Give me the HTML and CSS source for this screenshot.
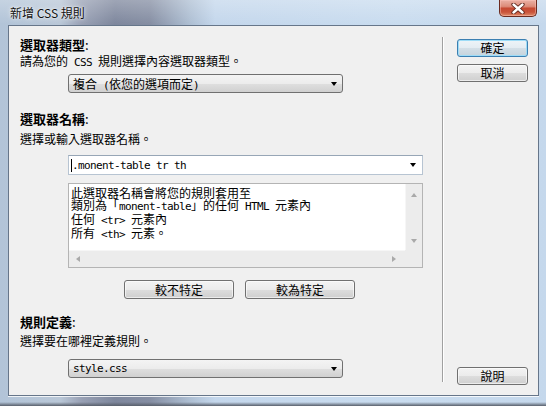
FILE: index.html
```html
<!DOCTYPE html>
<html lang="zh-Hant">
<head>
<meta charset="utf-8">
<title>新增 CSS 規則</title>
<link rel="stylesheet" href="styles.css">
</head>
<body>
<div class="window">
  <div class="titlebar">
    <span class="title">新增 CSS 規則</span>
    <div class="close">
      <svg width="16" height="11" viewBox="0 0 16 11">
        <path d="M3.5 1.5 L12.5 9.5 M12.5 1.5 L3.5 9.5" stroke="#5a2218" stroke-width="4.2" stroke-linecap="round"/>
        <path d="M3.5 1.5 L12.5 9.5 M12.5 1.5 L3.5 9.5" stroke="#ffffff" stroke-width="2.4" stroke-linecap="round"/>
      </svg>
    </div>
  </div>
  <div class="client">
    <div class="main">
      <div class="label first"><b>選取器類型</b>:</div>
      <div class="desc">請為您的<span class="en"> CSS </span>規則選擇內容選取器類型。</div>
      <div class="select s1"><span>複合<span class="en"> (</span>依您的選項而定<span class="en">)</span></span><i class="arrow"></i></div>

      <div class="label l2"><b>選取器名稱</b>:</div>
      <div class="desc d2">選擇或輸入選取器名稱。</div>
      <div class="combo"><span class="caret"></span><span class="en">.monent-table tr th</span><i class="arrow"></i></div>
      <div class="memo">
        <div class="memo-text">此選取器名稱會將您的規則套用至<br>類別為「<span class="en">monent-table</span>」的任何<span class="en"> HTML </span>元素內<br>任何<span class="en"> &lt;tr&gt; </span>元素內<br>所有<span class="en"> &lt;th&gt; </span>元素。</div>
        <div class="vscroll"><i class="up"></i><i class="down"></i></div>
        <div class="hscroll"><i class="left"></i><i class="right"></i></div>
        <div class="corner"></div>
      </div>
      <div class="btn-row">
        <button class="btn wide">較不特定</button>
        <button class="btn wide">較為特定</button>
      </div>

      <div class="label l3"><b>規則定義</b>:</div>
      <div class="desc d3">選擇要在哪裡定義規則。</div>
      <div class="select s3"><span class="en">style.css</span><i class="arrow"></i></div>
    </div>
    <div class="sep"></div>
    <div class="side">
      <button class="btn side-btn default">確定</button>
      <button class="btn side-btn cancel">取消</button>
      <button class="btn side-btn help">說明</button>
    </div>
  </div>
</div>
</body>
</html>
```
FILE: styles.css
```css
html, body {
  margin: 0;
  padding: 0;
}
body {
  width: 546px;
  height: 406px;
  overflow: hidden;
  font-family: "Noto Sans CJK TC", "Noto Sans", sans-serif;
  font-size: 12px;
  color: #000;
}
.window {
  box-sizing: border-box;
  width: 546px;
  height: 406px;
  padding: 0 7px 10px 8px;
  display: flex;
  flex-direction: column;
  background:
    linear-gradient(to bottom, rgba(0,0,0,0) 0, rgba(0,0,0,0) 402px, #59606c 406px),
    linear-gradient(to bottom, rgba(255,255,255,0.25) 0, rgba(255,255,255,0) 24px),
    linear-gradient(90deg, #b2c4d8 0, #b9c7d7 60px, #98a0b4 82px, #7e879d 115px, #858ea3 150px, #aebfd3 190px, #c4d7ec 215px, #c9dcef 400px, #c5d8ec 546px);
}
.titlebar {
  height: 25px;
  display: flex;
  align-items: flex-start;
  justify-content: space-between;
}
.title {
  margin-top: 5px;
  padding-left: 2px;
  line-height: 15px;
  font-size: 12px;
  color: #111;
  text-shadow: 0 0 5px rgba(255,255,255,0.9), 0 0 2px rgba(255,255,255,0.9);
}
.close {
  box-sizing: border-box;
  width: 38px;
  height: 17px;
  margin-right: 2px;
  border: 1px solid #6b2b20;
  border-top: none;
  border-radius: 0 0 5px 5px;
  background: linear-gradient(to bottom, #eab1a5 0, #dd8c7a 40%, #c64a33 52%, #c9533a 75%, #de8a68 100%);
  display: flex;
  align-items: center;
  justify-content: center;
  box-shadow: inset 0 0 0 1px rgba(255,200,190,0.45);
}
.close svg {
  display: block;
}
.client {
  display: flex;
  width: 531px;
  height: 371px;
  box-sizing: border-box;
  border: 1px solid #66768a;
  background: #f0f0f0;
  box-shadow: 0 1px 0 rgba(255,255,255,0.8);
}
.main {
  box-sizing: border-box;
  width: 433px;
  padding-left: 11px;
  display: flex;
  flex-direction: column;
}
.label {
  height: 16px;
  line-height: 16px;
  font-size: 13px;
}
.label b {
  font-weight: bold;
}
.first { margin-top: 11px; }
.l2 { margin-top: 18px; }
.l3 { margin-top: 15px; }
.desc {
  height: 16px;
  line-height: 16px;
  font-size: 12px;
  white-space: nowrap;
}
.d2 { margin-top: 4px; }
.d3 { margin-top: 3px; }
.en {
  font-family: "DejaVu Sans Mono", "Liberation Mono", monospace;
  font-size: 11px;
  letter-spacing: -0.62px;
  white-space: pre;
}
.select {
  box-sizing: border-box;
  margin-left: 48px;
  width: 275px;
  height: 19px;
  border: 1px solid #707070;
  border-radius: 3px;
  background: linear-gradient(to bottom, #f4f4f4 0, #ececec 50%, #dfdfdf 51%, #d0d0d0 100%);
  display: flex;
  align-items: center;
  padding-left: 4px;
  white-space: nowrap;
}
.s1 { margin-top: 5px; }
.s3 { margin-top: 10px; }
.arrow {
  display: block;
  margin-left: auto;
  margin-right: 5px;
  width: 0;
  height: 0;
  border-left: 3.5px solid transparent;
  border-right: 3.5px solid transparent;
  border-top: 4px solid #000;
}
.combo {
  box-sizing: border-box;
  margin-top: 8px;
  margin-left: 48px;
  width: 355px;
  height: 20px;
  border: 1px solid #b7c4d2;
  border-top-color: #97a6b6;
  background: #fff;
  display: flex;
  align-items: center;
  padding-left: 2px;
}
.combo .arrow {
  margin-right: 6px;
}
.caret {
  display: block;
  width: 1px;
  height: 13px;
  background: #000;
}
.memo {
  box-sizing: border-box;
  margin-top: 8px;
  margin-left: 48px;
  width: 355px;
  height: 85px;
  border: 1px solid #b4b4b4;
  background: #fff;
  display: grid;
  grid-template-columns: 1fr 17px;
  grid-template-rows: 1fr 17px;
}
.memo-text {
  padding: 3px 0 0 2px;
  line-height: 12px;
  font-size: 12px;
  white-space: nowrap;
  overflow: hidden;
}
.vscroll, .hscroll, .corner {
  background: #ececec;
}
.vscroll {
  display: flex;
  flex-direction: column;
  align-items: center;
  justify-content: space-between;
  padding: 9px 0 7px;
  border-left: 1px solid #f6f6f6;
}
.hscroll {
  display: flex;
  align-items: center;
  justify-content: space-between;
  padding: 0 9px 0 7px;
  border-top: 1px solid #f6f6f6;
}
.up, .down, .left, .right {
  display: block;
  width: 0;
  height: 0;
}
.up {
  border-left: 3.5px solid transparent;
  border-right: 3.5px solid transparent;
  border-bottom: 4px solid #a9a9a9;
}
.down {
  border-left: 3.5px solid transparent;
  border-right: 3.5px solid transparent;
  border-top: 4px solid #a9a9a9;
}
.left {
  border-top: 3.5px solid transparent;
  border-bottom: 3.5px solid transparent;
  border-right: 4px solid #a9a9a9;
}
.right {
  border-top: 3.5px solid transparent;
  border-bottom: 3.5px solid transparent;
  border-left: 4px solid #a9a9a9;
}
.btn-row {
  margin-top: 12px;
  margin-left: 104px;
  display: flex;
  gap: 11px;
}
.btn {
  box-sizing: border-box;
  height: 19px;
  padding: 0;
  border: 1px solid #707070;
  border-radius: 3px;
  background: linear-gradient(to bottom, #f3f3f3 0, #ebebeb 50%, #dddddd 51%, #cfcfcf 100%);
  box-shadow: inset 0 0 0 1px rgba(255,255,255,0.6);
  font-family: "Noto Sans CJK TC", "Noto Sans", sans-serif;
  font-size: 12px;
  line-height: 16px;
  color: #000;
  text-align: center;
}
.wide {
  width: 110px;
}
.sep {
  width: 1px;
  margin: 11px 0 13px;
  background: #a0a0a0;
  border-right: 1px solid #ffffff;
}
.side {
  flex: 1;
  display: flex;
  flex-direction: column;
  padding: 13px 0 10px 13px;
}
.side-btn {
  width: 71px;
  height: 18px;
}
.default {
  border-color: #3c7fb1;
  box-shadow: inset 0 0 0 1px #9edcf7;
  background: linear-gradient(to bottom, #eef4f8 0, #e4ecf2 50%, #d4dfe7 51%, #c6d3dc 100%);
}
.cancel {
  margin-top: 7px;
}
.help {
  margin-top: auto;
}
```
